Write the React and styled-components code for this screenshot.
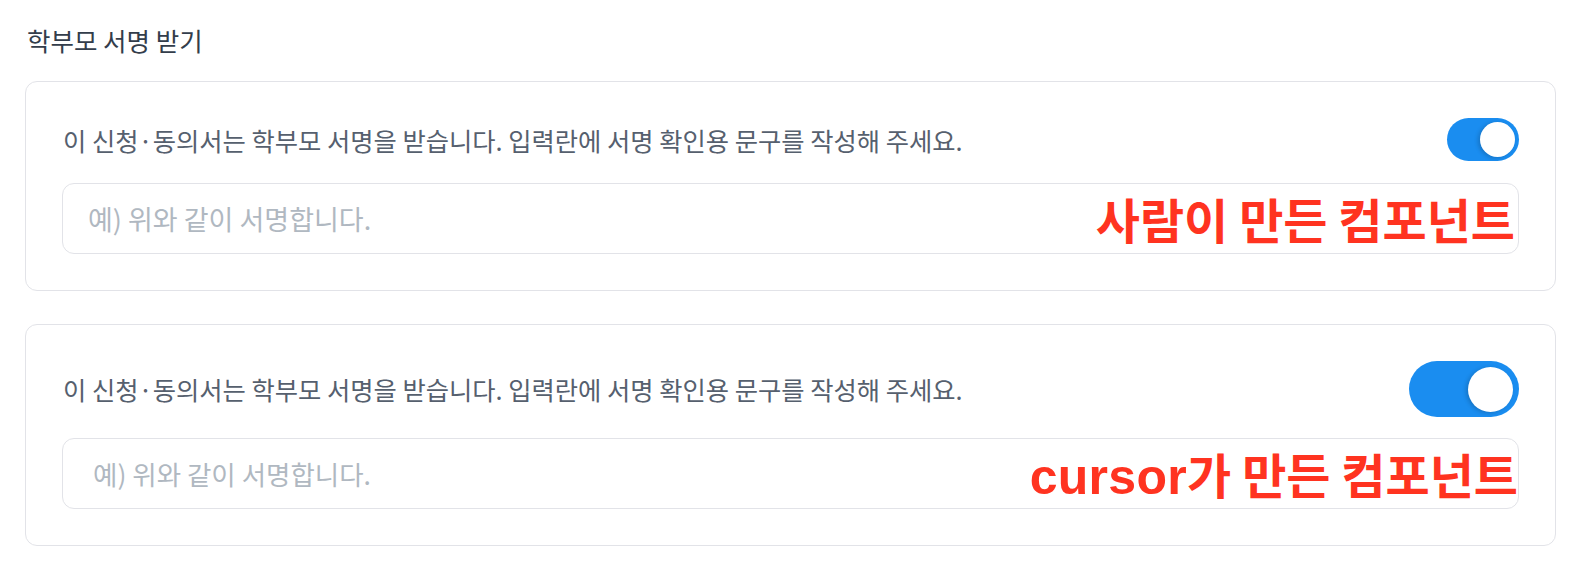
import React from "react";
import styled, { createGlobalStyle } from "styled-components";

const Global = createGlobalStyle`
  html, body { margin: 0; padding: 0; background: #ffffff; }
  body { font-family: "Noto Sans CJK KR", "Noto Sans", sans-serif; }
  * { box-sizing: border-box; }
`;

const Page = styled.div`
  padding: 21px 28px 0 25px;
  display: flex;
  flex-direction: column;
`;

const Title = styled.h2`
  margin: 0 0 0 2px;
  font-size: 25.5px;
  font-weight: 400;
  line-height: 38px;
  color: #333d4b;
`;

const Stack = styled.div`
  margin-top: 22px;
  display: flex;
  flex-direction: column;
  gap: 33px;
`;

const Card = styled.section`
  border: 1px solid #e2e3e8;
  border-radius: 12px;
  padding: 36px;
  display: flex;
  flex-direction: column;
  gap: ${(p) => p.$gap}px;
`;

const Row = styled.div`
  display: flex;
  align-items: center;
  justify-content: space-between;
`;

const Desc = styled.p`
  margin: 0 0 0 1px;
  font-size: 25.3px;
  color: #56606e;
  line-height: 34px;
`;

const Track = styled.div`
  width: ${(p) => p.$w}px;
  height: ${(p) => p.$h}px;
  border-radius: ${(p) => p.$h / 2}px;
  background: #1a8df0;
  display: flex;
  align-items: center;
  justify-content: flex-end;
  padding-right: ${(p) => p.$pad}px;
  flex-shrink: 0;
`;

const Knob = styled.div`
  width: ${(p) => p.$d}px;
  height: ${(p) => p.$d}px;
  border-radius: 50%;
  background: #ffffff;
  box-shadow: -2px 1px 4px rgba(0, 0, 0, 0.18);
`;

const Field = styled.div`
  position: relative;
`;

const Input = styled.input`
  width: 100%;
  height: 71px;
  border: 1px solid #e2e3e8;
  border-radius: 12px;
  padding: 0 0 0 ${(p) => p.$pad}px;
  font-family: "Noto Sans CJK KR", "Noto Sans", sans-serif;
  font-size: ${(p) => p.$fs}px;
  color: #333d4b;
  background: #fff;
  outline: none;
  &::placeholder { color: #b0b8c1; }
`;

const Note = styled.span`
  position: absolute;
  right: ${(p) => p.$right}px;
  top: ${(p) => p.$top}px;
  font-family: "Noto Sans CJK KR", sans-serif;
  font-size: 48px;
  font-weight: 700;
  line-height: 1;
  color: #ff3320;
  white-space: nowrap;
  pointer-events: none;
  text-shadow: 0 0 1px #fff, 0 0 2px #fff;
`;

const NoteLatin = styled.span`
  font-family: "Liberation Sans", Arial, sans-serif;
  font-weight: 700;
  font-size: 50px;
  letter-spacing: 0.3px;
`;

function Toggle({ w, h, d, pad }) {
  return (
    <Track $w={w} $h={h} $pad={pad}>
      <Knob $d={d} />
    </Track>
  );
}

const DESC = "이 신청·동의서는 학부모 서명을 받습니다. 입력란에 서명 확인용 문구를 작성해 주세요.";
const PH = "예) 위와 같이 서명합니다.";

export default function App() {
  return (
    <>
      <Global />
      <Page>
        <Title>학부모 서명 받기</Title>
        <Stack>
          <Card $gap={22}>
            <Row>
              <Desc>{DESC}</Desc>
              <Toggle w={72} h={43} d={35} pad={4} />
            </Row>
            <Field>
              <Input $pad={25} $fs={27} placeholder={PH} readOnly />
              <Note $right={4} $top={11}>사람이 만든 컴포넌트</Note>
            </Field>
          </Card>
          <Card $gap={21}>
            <Row>
              <Desc>{DESC}</Desc>
              <Toggle w={110} h={56} d={45} pad={6} />
            </Row>
            <Field>
              <Input $pad={30} $fs={26.5} placeholder={PH} readOnly />
              <Note $right={1} $top={11}>
                <NoteLatin>cursor</NoteLatin>가 만든 컴포넌트
              </Note>
            </Field>
          </Card>
        </Stack>
      </Page>
    </>
  );
}
